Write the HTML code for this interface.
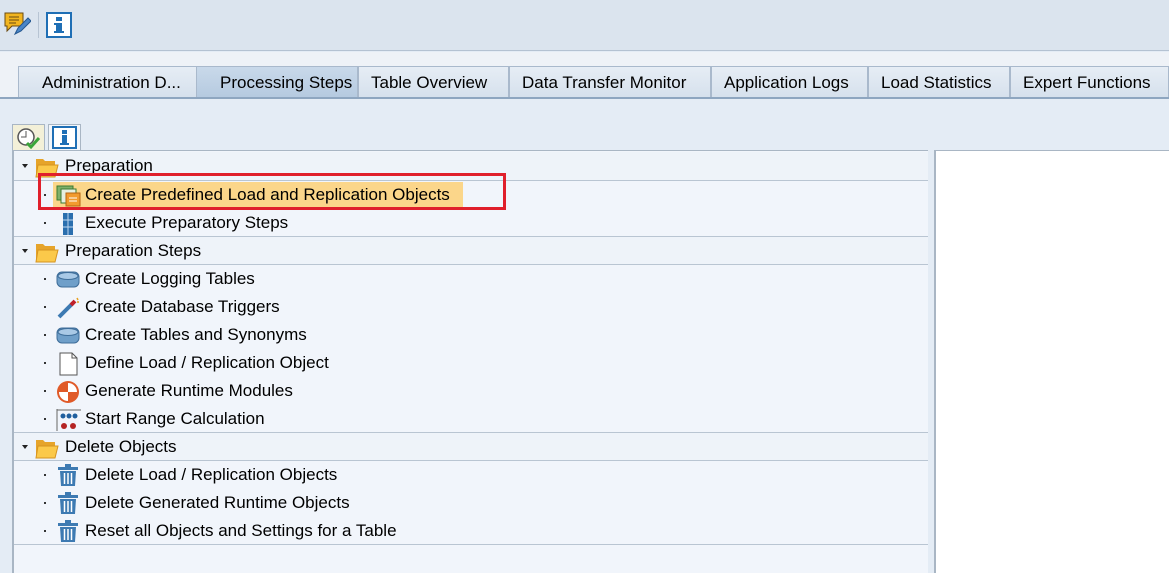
<!DOCTYPE html>
<html><head><style>
*{margin:0;padding:0;box-sizing:border-box}
body{width:1169px;height:573px;overflow:hidden;background:#e4ecf5;font-family:"Liberation Sans",Arial,sans-serif;position:relative;color:#000}
.abs{position:absolute}
#tb{left:0;top:0;width:1169px;height:51px;background:#dbe4ee;border-bottom:1px solid #b4c2d2}
#tabarea{left:0;top:52px;width:1169px;height:46px;background:#eef2f7}
.tab{position:absolute;top:66px;height:33px;background:linear-gradient(#e6edf5,#d5e0ec);border:1px solid #a9b9cc;border-bottom:none;font-size:17px;line-height:32px;padding-left:12px;white-space:nowrap}
.tab.act{background:linear-gradient(#c9d9ea,#b4c9df)}
#tabline{left:0;top:97px;width:1169px;height:2px;background:#8ea6c0}
#tree{left:12px;top:150px;width:916px;height:423px;background:#f1f5fb;border-left:2px solid #a9b6c4;border-top:1px solid #a9b6c4}
#right{left:934px;top:150px;width:235px;height:423px;background:#fff;border-left:2px solid #a9b6c4;border-top:1px solid #a9b6c4}
.row{position:absolute;left:0;width:914px;height:28px;font-size:17px;line-height:28px}
.hdr{background:#eef3f9}
.ln{position:absolute;left:0;width:914px;height:1px;background:#b9c5d2}
.txt{position:absolute;left:71px;top:0}
.htxt{position:absolute;left:51px;top:0}
.dot{position:absolute;left:30px;top:13px;width:2px;height:2px;background:#333}
.tri{position:absolute;left:8px;top:12px;width:0;height:0;border-left:3px solid transparent;border-right:3px solid transparent;border-top:4px solid #222}
.ic{position:absolute;left:42px;top:3px}
.btn{position:absolute;top:124px;width:33px;height:27px;border:1px solid #a9b6c4;background:#f3f0d8}
</style></head><body>
<div id="tb" class="abs">
 <svg class="abs" style="left:3px;top:10px" width="28" height="28" viewBox="0 0 28 28"><path d="M2 3h18v13H9l-5 5v-5H2z" fill="#f2b51f" stroke="#6b4a10"/><path d="M6 7h10M6 10h10M6 13h7" stroke="#6b4a10"/><path d="M12 24l3-6 10-10 3 3-10 10z" fill="#4a86c8" stroke="#24578f"/></svg>
 <div class="abs" style="left:38px;top:12px;width:1px;height:26px;background:#b7c4d3"></div>
 <svg class="abs" style="left:46px;top:12px" width="26" height="26"><rect x="1" y="1" width="24" height="24" fill="#fff" stroke="#1f6fb5" stroke-width="2"/><rect x="10" y="5" width="6" height="4" fill="#1f6fb5"/><rect x="10" y="11" width="6" height="10" fill="#1f6fb5"/><rect x="8" y="11" width="4" height="2" fill="#1f6fb5"/><rect x="8" y="19" width="10" height="2" fill="#1f6fb5"/></svg>
</div>
<div id="tabarea" class="abs"></div>
<div class="tab" style="left:18px;width:180px;padding-left:23px">Administration D...</div>
<div class="tab act" style="left:196px;width:162px;padding-left:23px">Processing Steps</div>
<div class="tab" style="left:358px;width:151px">Table Overview</div>
<div class="tab" style="left:509px;width:202px">Data Transfer Monitor</div>
<div class="tab" style="left:711px;width:157px">Application Logs</div>
<div class="tab" style="left:868px;width:142px">Load Statistics</div>
<div class="tab" style="left:1010px;width:159px">Expert Functions</div>
<div id="tabline" class="abs"></div>
<div class="btn" style="left:12px"><svg width="31" height="25"><circle cx="13" cy="12" r="8" fill="#fff" stroke="#555" stroke-width="1.5"/><path d="M13 6v6h-5" stroke="#555" fill="none"/><path d="M14 18l4 4 8-9" stroke="#3aa53a" stroke-width="3" fill="none"/></svg></div>
<div class="btn" style="left:48px;background:#f3f6fa"><svg width="31" height="25"><rect x="4" y="2" width="23" height="21" fill="#fff" stroke="#1f6fb5" stroke-width="2"/><rect x="13" y="5" width="5" height="4" fill="#1f6fb5"/><rect x="13" y="10" width="5" height="10" fill="#1f6fb5"/><rect x="11" y="18" width="9" height="2" fill="#1f6fb5"/></svg></div>
<div id="tree" class="abs">
<svg width="0" height="0" style="position:absolute"><defs>
<g id="fold"><path d="M1 4h7l2 2h10v16H1z" fill="#e6a42a"/><path d="M3 10h20l-3 12H1z" fill="#fbc94a" stroke="#d69420"/></g>
<g id="db"><rect x="1" y="4" width="22" height="15" rx="5" fill="#6f9fc9" stroke="#3e6d99"/><ellipse cx="12" cy="8" rx="10" ry="3.5" fill="#a9c9e6" stroke="#3e6d99"/></g>
<g id="trash"><rect x="2" y="3" width="20" height="3" fill="#3d7ab2"/><rect x="9" y="0" width="6" height="3" fill="#3d7ab2"/><path d="M4 7h16l-1 15H5z" fill="#3d7ab2"/><path d="M8.5 9v11M12 9v11M15.5 9v11" stroke="#fff" stroke-width="1.5"/></g>
</defs></svg>
<div class="row hdr" style="top:1px"><div class="tri"></div><svg class="ic" style="left:21px" width="26" height="24"><use href="#fold"/></svg><span class="htxt">Preparation</span></div>
<div class="ln" style="top:29px"></div>
<div class="row" style="top:30px"><div class="dot"></div><div style="position:absolute;left:39px;top:1px;width:410px;height:26px;background:#fbd68a"></div><svg class="ic" width="26" height="24"><rect x="1" y="2" width="16" height="14" fill="#7fb06a" stroke="#3c7a30"/><rect x="5" y="5" width="15" height="14" fill="#e6efe0" stroke="#3c7a30"/><rect x="10" y="9" width="14" height="13" fill="#f29a2e" stroke="#b56412"/><path d="M13 14h8M13 17h8" stroke="#fff"/></svg><span class="txt">Create Predefined Load and Replication Objects</span></div>
<div class="row" style="top:58px"><div class="dot"></div><svg class="ic" width="26" height="24"><rect x="7" y="1" width="10" height="22" fill="#2b6fae"/><path d="M7 8h10M7 15h10M12 1v22" stroke="#bcd6ee"/></svg><span class="txt">Execute Preparatory Steps</span></div>
<div class="ln" style="top:85px"></div>
<div class="row hdr" style="top:86px"><div class="tri"></div><svg class="ic" style="left:21px" width="26" height="24"><use href="#fold"/></svg><span class="htxt">Preparation Steps</span></div>
<div class="ln" style="top:113px"></div>
<div class="row" style="top:114px"><div class="dot"></div><svg class="ic" width="26" height="24"><use href="#db"/></svg><span class="txt">Create Logging Tables</span></div>
<div class="row" style="top:142px"><div class="dot"></div><svg class="ic" width="26" height="24"><path d="M3 21L17 7" stroke="#3d7ab2" stroke-width="4"/><path d="M15 9l4-4" stroke="#c0202a" stroke-width="4"/><path d="M21 2l1 2M23 6l-2 0" stroke="#e8a020" stroke-width="1.5"/></svg><span class="txt">Create Database Triggers</span></div>
<div class="row" style="top:170px"><div class="dot"></div><svg class="ic" width="26" height="24"><use href="#db"/></svg><span class="txt">Create Tables and Synonyms</span></div>
<div class="row" style="top:198px"><div class="dot"></div><svg class="ic" width="26" height="24"><path d="M4 1h12l5 5v17H4z" fill="#fff" stroke="#555"/><path d="M16 1v5h5" fill="none" stroke="#555"/></svg><span class="txt">Define Load / Replication Object</span></div>
<div class="row" style="top:226px"><div class="dot"></div><svg class="ic" width="26" height="24"><circle cx="12" cy="12" r="11" fill="#e05a28"/><path d="M12 3v9H3a9 9 0 0 0 9 9v-9h9a9 9 0 0 0-9-9z" fill="#fff"/></svg><span class="txt">Generate Runtime Modules</span></div>
<div class="row" style="top:254px"><div class="dot"></div><svg class="ic" width="26" height="24"><path d="M1 1v22M1 2h24" stroke="#666"/><circle cx="7" cy="8" r="2.5" fill="#1f5f9e"/><circle cx="13" cy="8" r="2.5" fill="#1f5f9e"/><circle cx="19" cy="8" r="2.5" fill="#1f5f9e"/><circle cx="8" cy="18" r="3" fill="#b42424"/><circle cx="17" cy="18" r="3" fill="#b42424"/></svg><span class="txt">Start Range Calculation</span></div>
<div class="ln" style="top:281px"></div>
<div class="row hdr" style="top:282px"><div class="tri"></div><svg class="ic" style="left:21px" width="26" height="24"><use href="#fold"/></svg><span class="htxt">Delete Objects</span></div>
<div class="ln" style="top:309px"></div>
<div class="row" style="top:310px"><div class="dot"></div><svg class="ic" width="26" height="24"><use href="#trash"/></svg><span class="txt">Delete Load / Replication Objects</span></div>
<div class="row" style="top:338px"><div class="dot"></div><svg class="ic" width="26" height="24"><use href="#trash"/></svg><span class="txt">Delete Generated Runtime Objects</span></div>
<div class="row" style="top:366px"><div class="dot"></div><svg class="ic" width="26" height="24"><use href="#trash"/></svg><span class="txt">Reset all Objects and Settings for a Table</span></div>
<div class="ln" style="top:393px"></div>
</div>
<div id="right" class="abs"></div>
<div class="abs" style="left:38px;top:173px;width:468px;height:37px;border:3px solid #e01f2b"></div>
</body></html>
